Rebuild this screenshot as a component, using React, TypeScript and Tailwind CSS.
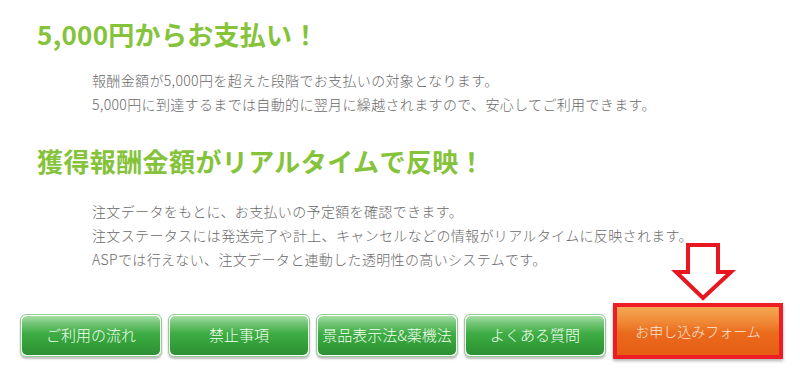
import React from "react";

const greenButtons = ["ご利用の流れ", "禁止事項", "景品表示法&薬機法", "よくある質問"];

function GreenButton({ label }: { label: string }) {
  return (
    <div className="mt-[11px] w-[142px] h-[43px] rounded-[6px] border border-[#8fcf8f] bg-white p-[1px] shadow-[0_2px_2px_rgba(0,0,0,0.25)]">
      <div className="w-full h-full rounded-[5px] bg-[linear-gradient(to_bottom,#a8dea8_0%,#74c676_18%,#3fad45_45%,#34a03a_70%,#2e8f34_100%)] flex items-center justify-center text-[15px] font-light text-[#f4fff4] whitespace-nowrap">
        {label}
      </div>
    </div>
  );
}

export default function App() {
  return (
    <div
      className="relative w-[800px] h-[383px] overflow-hidden bg-white"
      style={{ fontFamily: '"Noto Sans CJK JP", "Noto Sans", sans-serif' }}
    >
      <h2 className="ml-[37px] mt-[19px] text-[26px] leading-[30px] font-bold text-[#84c33a] tracking-[0.3px]">
        5,000円からお支払い！
      </h2>
      <div className="ml-[92px] mt-[19px] text-[14px] leading-[24px] font-light text-[#6a6a6a] tracking-[0.35px]">
        <p>報酬金額が5,000円を超えた段階でお支払いの対象となります。</p>
        <p>5,000円に到達するまでは自動的に翌月に繰越されますので、安心してご利用できます。</p>
      </div>
      <h2 className="ml-[37px] mt-[30px] text-[26px] leading-[30px] font-bold text-[#84c33a] tracking-[0.4px]">
        獲得報酬金額がリアルタイムで反映！
      </h2>
      <div className="ml-[92px] mt-[23px] text-[14px] leading-[24px] font-light text-[#6a6a6a] tracking-[0.35px]">
        <p>注文データをもとに、お支払いの予定額を確認できます。</p>
        <p>注文ステータスには発送完了や計上、キャンセルなどの情報がリアルタイムに反映されます。</p>
        <p>ASPでは行えない、注文データと連動した透明性の高いシステムです。</p>
      </div>
      <div className="ml-[20px] mt-[32px] flex items-start gap-[6px]">
        {greenButtons.map((b) => (
          <GreenButton key={b} label={b} />
        ))}
        <div className="ml-[1px] w-[170px] h-[56px] border-[4px] border-[#ee1c25] bg-[linear-gradient(to_bottom,#f4a752_0%,#ef8a36_30%,#ea6a1c_55%,#e65d14_100%)] shadow-[0_2px_3px_rgba(0,0,0,0.3)] flex items-center justify-center text-[14px] font-light text-[#fde6d4]">
          お申し込みフォーム
        </div>
      </div>
      <svg
        className="absolute left-[670px] top-[240px]"
        width="70"
        height="64"
        viewBox="0 0 70 64"
      >
        <polygon
          points="18,5 48,5 48,32 61,32 33,58 6,32 18,32"
          fill="#ffffff"
          stroke="#e8161f"
          strokeWidth="4"
          strokeLinejoin="miter"
        />
      </svg>
    </div>
  );
}
